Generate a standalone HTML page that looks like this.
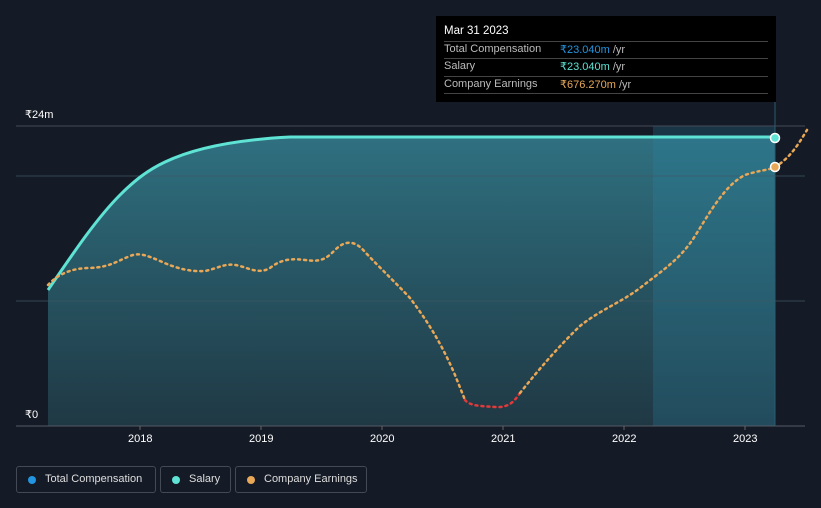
<!DOCTYPE html>
<html><head><meta charset="utf-8"><style>
html,body{margin:0;width:821px;height:508px;overflow:hidden}
body{background:#151b26;font-family:"Liberation Sans",sans-serif;position:relative}
.t{position:absolute;color:#fff;font-size:11px}
.leg{position:absolute;top:466px;height:27px;border:1px solid #444a55;border-radius:3px;color:#ddd;font-size:11px;line-height:25px;box-sizing:border-box;white-space:nowrap}
.leg i{position:absolute;left:11px;top:9px;width:8px;height:8px;border-radius:50%}
.tip{position:absolute;left:436px;top:16px;width:340px;height:86px;background:#000}
.tip div{position:absolute;left:8px;font-size:11px;color:#bbb;white-space:nowrap}
.tip hr{position:absolute;left:8px;width:324px;margin:0;border:0;border-top:1px solid #444}
</style></head><body>
<svg width="821" height="508" style="position:absolute;left:0;top:0">
<defs><linearGradient id="g" x1="0" y1="0" x2="0" y2="1"><stop offset="0" stop-color="#2f7080"/><stop offset="1" stop-color="#1f3844"/></linearGradient></defs>
<path d="M48,290 C70,258 95,220 120,195 C135,180 148,170 165,162 C190,150 230,140 290,137 L775,137 L775,426 L48,426Z" fill="url(#g)"/>
<rect x="653" y="126" width="122" height="300" fill="#2a86a8" opacity="0.25"/>
<line x1="16" y1="126" x2="805" y2="126" stroke="#444a55"/>
<line x1="16" y1="176" x2="805" y2="176" stroke="#3f5866" opacity="0.7"/>
<line x1="16" y1="301" x2="805" y2="301" stroke="#3f5866" opacity="0.7"/>
<line x1="16" y1="426" x2="805" y2="426" stroke="#555b66"/>
<line x1="775" y1="100" x2="775" y2="426" stroke="#2a5d70"/>
<g stroke="#666" ><line x1="140" y1="426" x2="140" y2="430"/><line x1="261" y1="426" x2="261" y2="430"/><line x1="382" y1="426" x2="382" y2="430"/><line x1="503" y1="426" x2="503" y2="430"/><line x1="624" y1="426" x2="624" y2="430"/><line x1="745" y1="426" x2="745" y2="430"/></g>
<path d="M48,290 C70,258 95,220 120,195 C135,180 148,170 165,162 C190,150 230,140 290,137 L775,137" fill="none" stroke="#5ee3d4" stroke-width="3"/>
<path d="M48,285 C60,272 75,268 90,268 C110,267 115,262 130,256 C140,252 148,256 160,261 C175,268 190,272 205,271 C220,268 225,262 240,266 C250,269 260,274 270,268 C280,260 290,258 305,260 C320,262 325,260 335,250 C345,240 355,240 365,252 C380,268 395,282 410,298 C425,318 440,340 455,375 L465,400" fill="none" stroke="#e8a857" stroke-width="2.5" stroke-dasharray="2 4" stroke-linecap="round"/>
<path d="M465,400 C470,406 480,406 495,407 C510,408 515,400 520,393" fill="none" stroke="#e03a3a" stroke-width="2.5" stroke-dasharray="2 4" stroke-linecap="round"/>
<path d="M520,393 C540,368 560,345 580,326 C600,310 620,303 640,288 C660,272 680,260 695,236 C710,212 725,185 745,175 C760,170 770,170 775,167 C790,158 798,145 807,130" fill="none" stroke="#e8a857" stroke-width="2.5" stroke-dasharray="2 4" stroke-linecap="round"/>
<circle cx="775" cy="138" r="4.5" fill="#5ee3d4" stroke="#fff" stroke-width="1.5"/>
<circle cx="775" cy="167" r="4.5" fill="#e8a857" stroke="#fff" stroke-width="1.5"/>
</svg>
<div class="t" style="left:25px;top:108px">₹24m</div>
<div class="t" style="left:25px;top:408px">₹0</div>
<div class="t" style="left:128px;top:433px">2018</div>
<div class="t" style="left:249px;top:433px">2019</div>
<div class="t" style="left:370px;top:433px">2020</div>
<div class="t" style="left:491px;top:433px">2021</div>
<div class="t" style="left:612px;top:433px">2022</div>
<div class="t" style="left:733px;top:433px">2023</div>
<div class="tip">
<div style="top:9px;color:#fff;font-size:11.5px">Mar 31 2023</div>
<hr style="top:25px"><div style="top:27px">Total Compensation</div><div style="left:124px;top:27px"><span style="color:#2394df">₹23.040m</span> /yr</div>
<hr style="top:42px"><div style="top:44px">Salary</div><div style="left:124px;top:44px"><span style="color:#5ee3d4">₹23.040m</span> /yr</div>
<hr style="top:60px"><div style="top:62px">Company Earnings</div><div style="left:124px;top:62px"><span style="color:#e8a857">₹676.270m</span> /yr</div>
<hr style="top:77px">
</div>
<div class="leg" style="left:16px;width:140px"><i style="background:#2394df"></i><span style="padding-left:28px">Total Compensation</span></div>
<div class="leg" style="left:160px;width:71px"><i style="background:#5ee3d4"></i><span style="padding-left:28px">Salary</span></div>
<div class="leg" style="left:235px;width:132px"><i style="background:#e8a857"></i><span style="padding-left:28px">Company Earnings</span></div>
</body></html>
